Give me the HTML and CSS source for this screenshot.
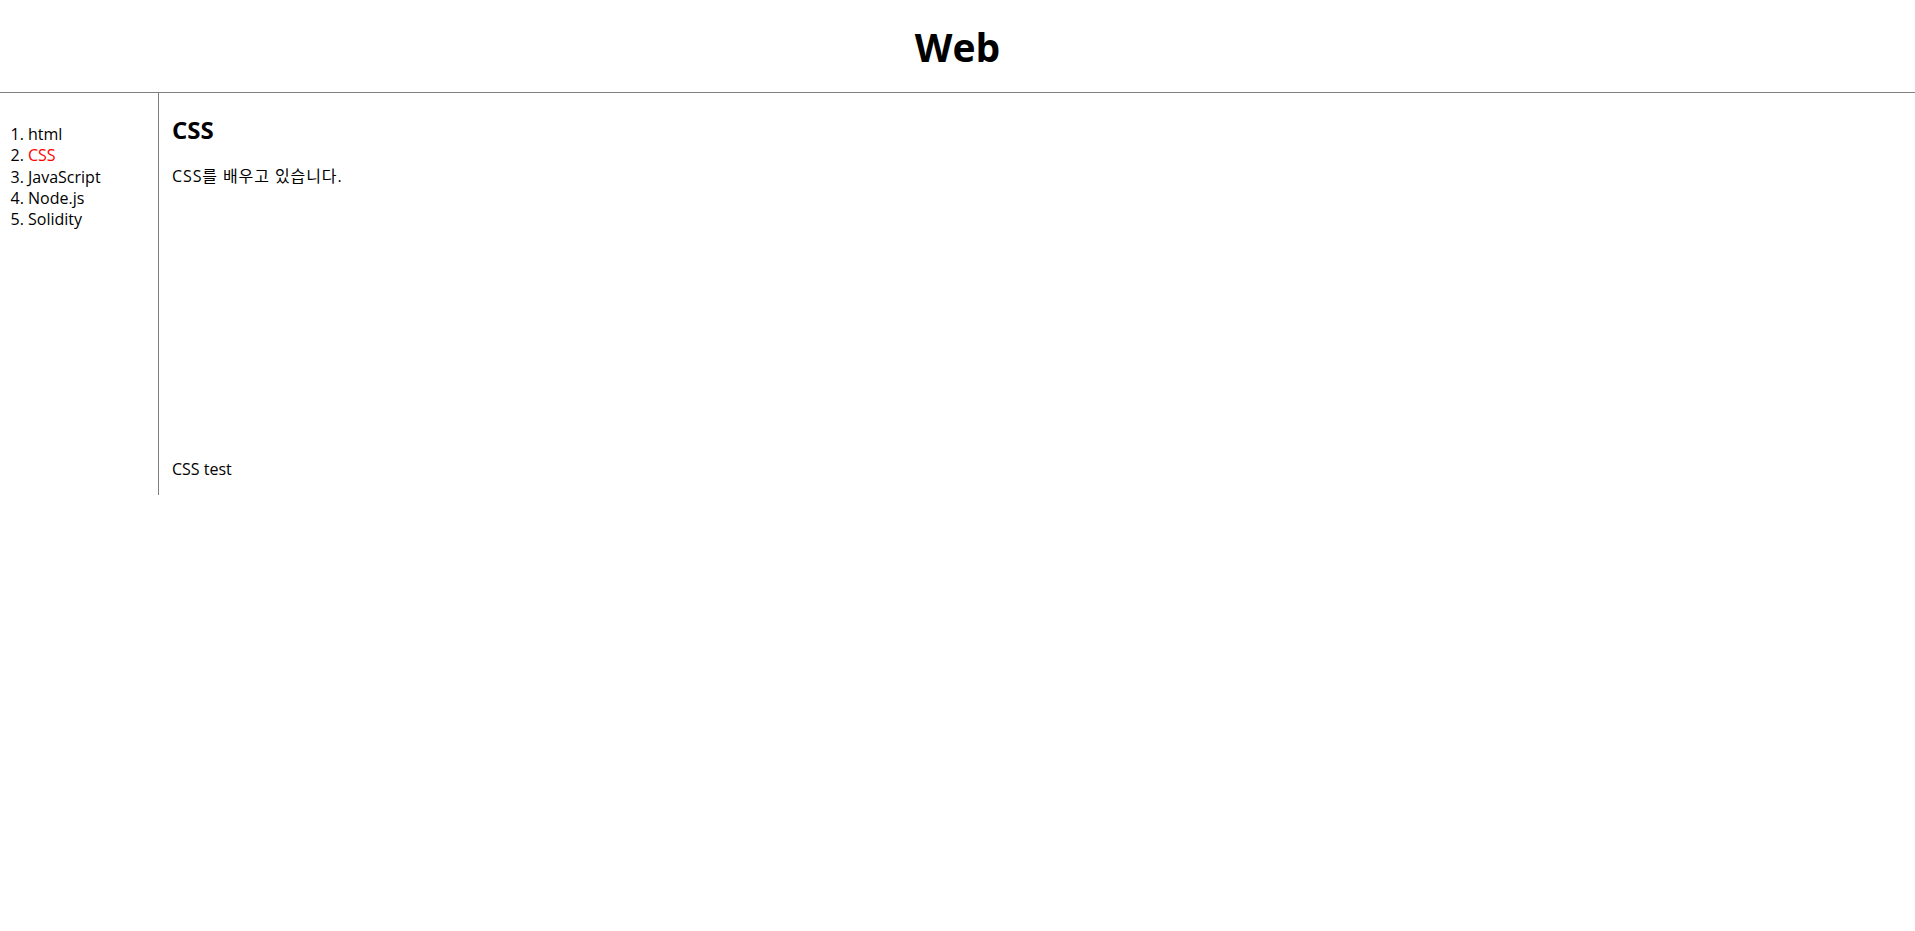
FILE: index.html
```html
<!DOCTYPE html>
<html lang="ko">

<head>
  <meta charset="UTF-8">
  <title>WEB - CSS</title>
  <link rel="stylesheet" href="styles.css">
</head>

<body>
  <h1><a href="index.html">Web</a></h1>

  <div id="grid">
    <ol>
      <li><a href="1.html">html</a></li>
      <li><a href="2.html" class="saw">CSS</a></li>
      <li><a href="3.html">JavaScript</a></li>
      <li><a href="4.html">Node.js</a></li>
      <li><a href="5.html">Solidity</a></li>
    </ol>

    <div id="article">
      <h2>CSS</h2>
      <p class="intro">CSS를 배우고 있습니다.</p>
      <div class="blank"></div>
      <p class="test">CSS test</p>
    </div>
  </div>
</body>

</html>
```

FILE: styles.css
```css
body {
  margin: 0;
  font-family: "Open Sans", "Noto Sans CJK KR", sans-serif;
  font-size: 16px;
  line-height: 1.33;
  color: #000;
  background: #fff;
}

a {
  color: black;
  text-decoration: none;
}

a.saw {
  color: red;
}

h1 {
  font-size: 39px;
  line-height: 52px;
  text-align: center;
  margin: 0;
  padding: 21px 0 19px;
  border-bottom: 1px solid gray;
}

#grid {
  display: grid;
  grid-template-columns: 159px 1fr;
}

ol {
  margin: 0;
  padding: 31px 0 0 28px;
  border-right: 1px solid gray;
}

#article {
  padding: 21px 0 0 13px;
}

#article h2 {
  font-size: 24px;
  line-height: 32px;
  margin: 0 0 20px;
}

#article p {
  margin: 0;
}

#article p.intro {
  letter-spacing: 0.9px;
}

.blank {
  height: 272px;
}

#article p.test {
  margin-bottom: 14px;
}
```
